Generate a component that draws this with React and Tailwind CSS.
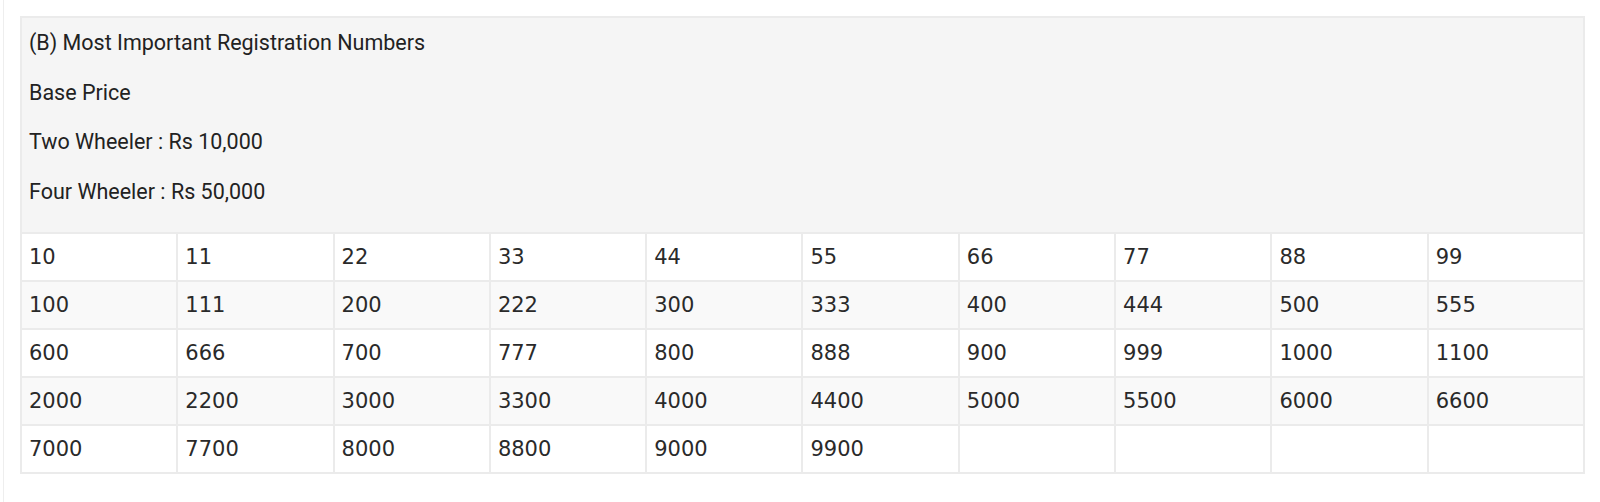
import React from "react";

const rows = [
  ["10", "11", "22", "33", "44", "55", "66", "77", "88", "99"],
  ["100", "111", "200", "222", "300", "333", "400", "444", "500", "555"],
  ["600", "666", "700", "777", "800", "888", "900", "999", "1000", "1100"],
  ["2000", "2200", "3000", "3300", "4000", "4400", "5000", "5500", "6000", "6600"],
  ["7000", "7700", "8000", "8800", "9000", "9900", "", "", "", ""],
];

export default function App() {
  return (
    <div className="w-[1600px] h-[502px] bg-white">
      <div className="ml-[3px] h-full border-l border-[#eeeeee] pl-[16px] pt-[16px]">
        <table
          className="w-[1565px] border-separate border-spacing-0 border border-[#ebebeb] text-[#222222] table-fixed"
        >
          <tbody>
            <tr>
              <td
                colSpan={10}
                className="bg-[#f5f5f5] border border-[#ebebeb] px-[7px] pb-[16px] align-top"
                style={{ fontFamily: "Roboto, 'Noto Sans', sans-serif" }}
              >
                <div className="text-[21.5px] leading-[49.5px]">(B) Most Important Registration Numbers</div>
                <div className="text-[21.5px] leading-[49.5px]">Base Price</div>
                <div className="text-[21.5px] leading-[49.5px]">Two Wheeler : Rs 10,000</div>
                <div className="text-[21.5px] leading-[49.5px]">Four Wheeler : Rs 50,000</div>
              </td>
            </tr>
            {rows.map((r, i) => (
              <tr key={i} className={i % 2 === 1 ? "bg-[#f9f9f9]" : "bg-white"}>
                {r.map((c, j) => (
                  <td
                    key={j}
                    className="h-[48px] border border-[#ebebeb] px-[7px] text-[21px] leading-[24px] align-middle text-[#2a2a2a]"
                    style={{ fontFamily: "'DejaVu Sans', sans-serif" }}
                  >
                    {c}
                  </td>
                ))}
              </tr>
            ))}
          </tbody>
        </table>
      </div>
    </div>
  );
}
